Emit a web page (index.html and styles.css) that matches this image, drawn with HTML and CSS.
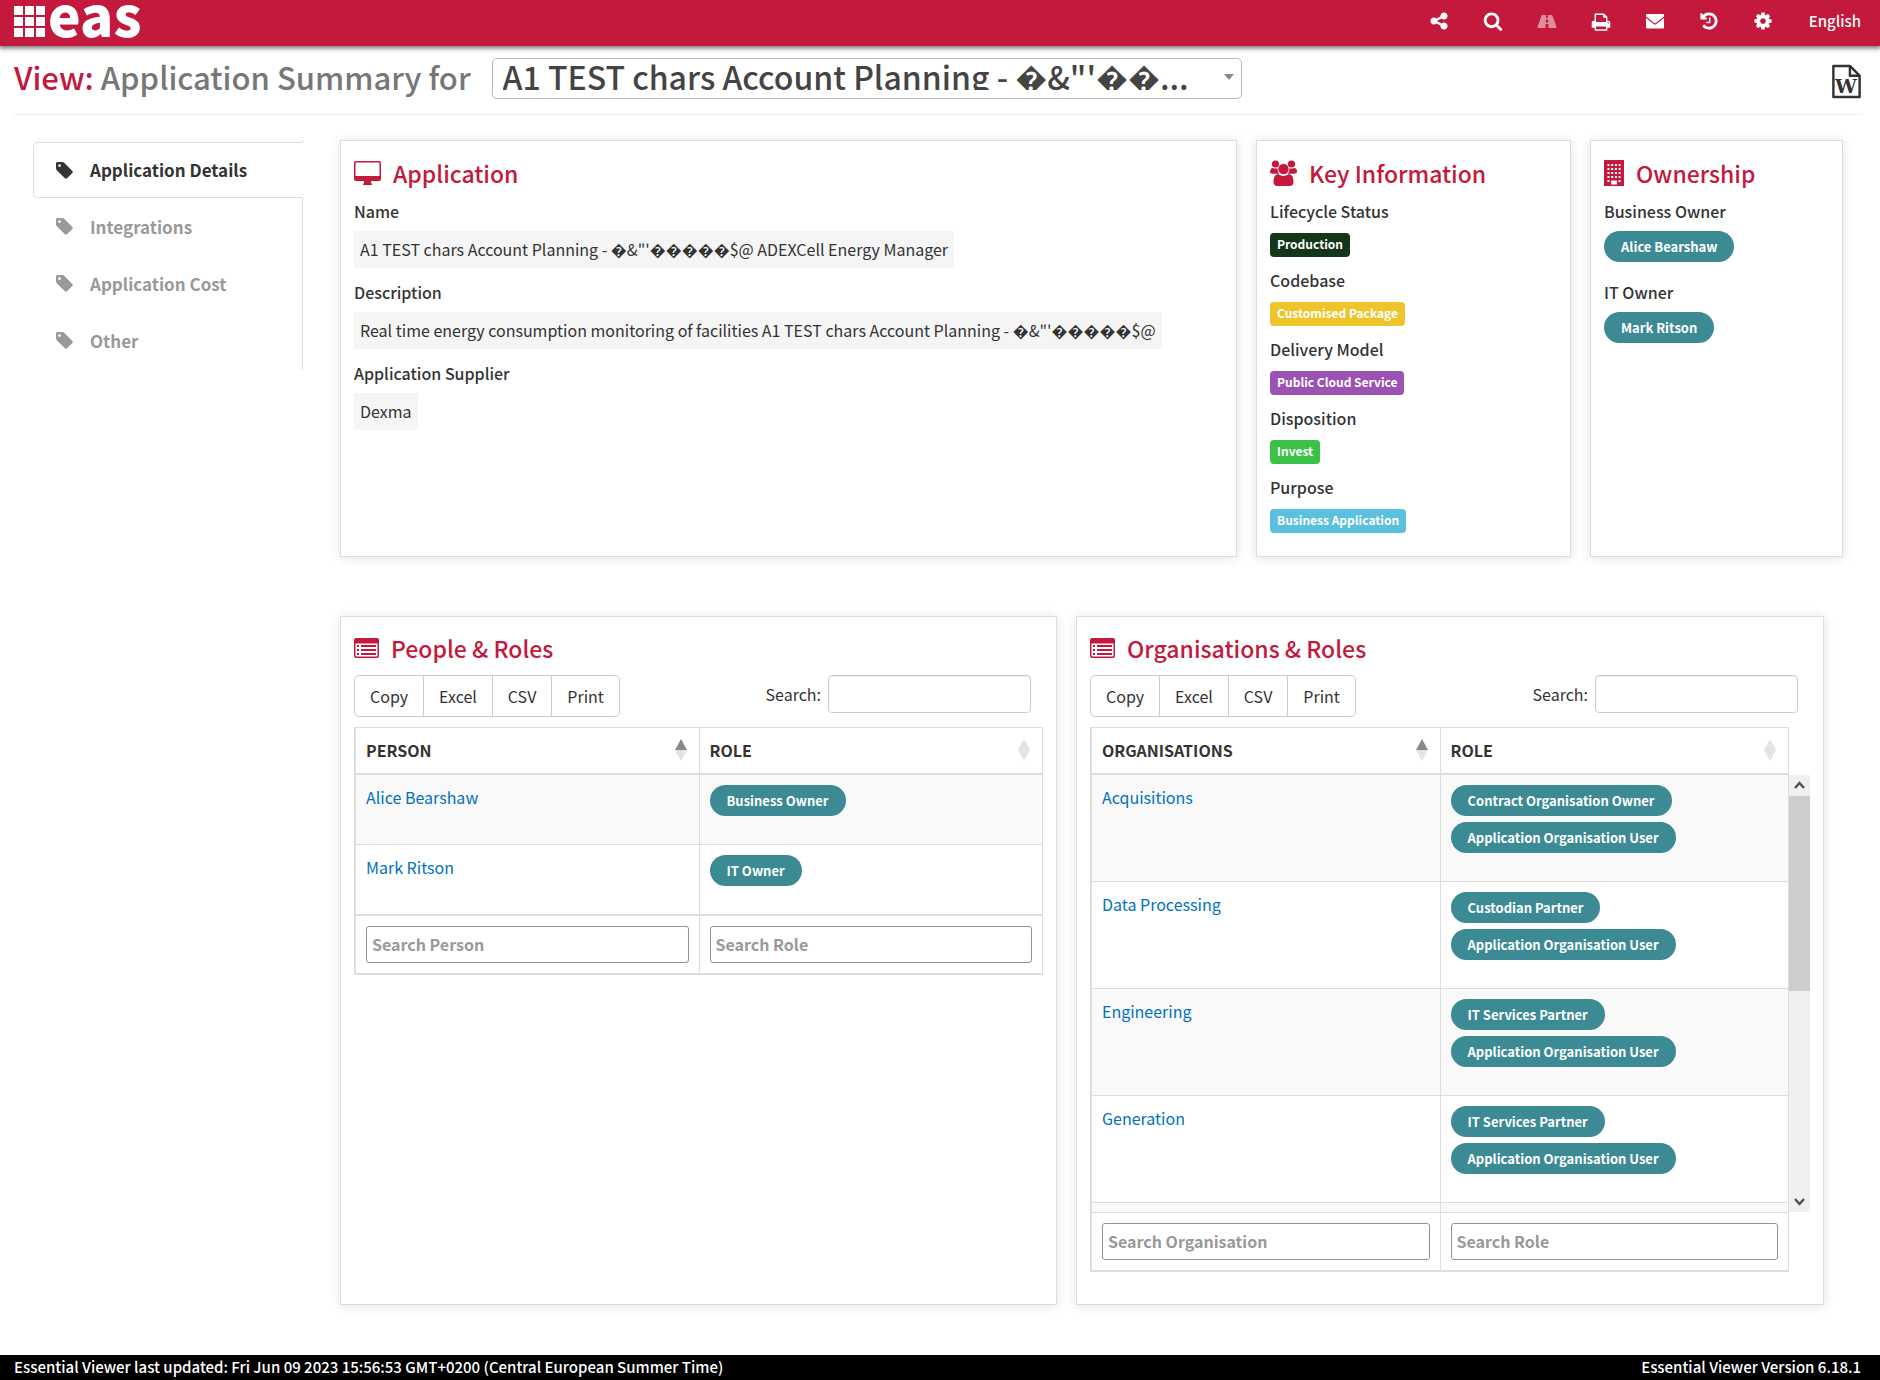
FILE: index.html
```html
<!DOCTYPE html>
<html lang="en">
<head>
<meta charset="utf-8">
<meta name="viewport" content="width=device-width, initial-scale=1">
<title>Application Summary</title>
<link rel="stylesheet" href="styles.css">
</head>
<body>
<svg class="sprite" aria-hidden="true">
  <symbol id="tag" viewBox="128 128 1536 1536"><path d="M576 448q0-53-37.500-90.500t-90.500-37.500-90.500 37.500-37.500 90.500 37.500 90.500 90.500 37.500 90.500-37.500 37.500-90.500zm1067 576q0 53-37 90l-491 492q-39 37-91 37-53 0-90-37l-715-716q-38-37-64.500-101t-26.500-117v-416q0-52 38-90t90-38h416q53 0 117 26.500t102 64.500l715 714q37 39 37 91z"/></symbol>
  <symbol id="list" viewBox="0 0 25 20"><path fill-rule="evenodd" d="M2 0H23a2 2 0 0 1 2 2V18a2 2 0 0 1-2 2H2a2 2 0 0 1-2-2V2A2 2 0 0 1 2 0ZM1.500 5.500V17.500a1 1 0 0 0 1 1H22.500a1 1 0 0 0 1-1V5.500ZM3 7H5V9H3ZM7 7H22V9H7ZM3 11H5V13H3ZM7 11H22V13H7ZM3 15H5V17H3ZM7 15H22V17H7Z"/></symbol>
</svg>

<header class="topbar">
  <a class="logo" href="#" aria-label="eas home">
    <svg width="31" height="32" viewBox="0 0 31 32" fill="#fff" aria-hidden="true"><path d="M0 0h9v9H0zM11 0h9v9h-9zM22 0h9v9h-9zM0 11h9v9H0zM11 11h9v9h-9zM22 11h9v9h-9zM0 22h9v9H0zM11 22h9v9h-9zM22 22h9v9h-9z"/></svg>
    <span class="logo-text">eas</span>
  </a>
  <nav class="tools" aria-label="Tools">
    <a href="#" aria-label="Share"><svg width="20" height="20" viewBox="0 0 1792 1792"><path d="M1344 1024q133 0 226.500 93.500t93.500 226.500-93.500 226.500-226.500 93.500-226.500-93.500-93.500-226.500q0-12 2-34l-360-180q-92 86-218 86-133 0-226.500-93.500t-93.500-226.500 93.500-226.500 226.500-93.500q126 0 218 86l360-180q-2-22-2-34 0-133 93.500-226.500t226.500-93.500 226.500 93.500 93.500 226.500-93.500 226.500-226.500 93.500q-126 0-218-86l-360 180q2 22 2 34t-2 34l360 180q92-86 218-86z"/></svg></a>
    <a href="#" aria-label="Search"><svg width="20" height="20" viewBox="0 0 1792 1792"><path d="M1216 832q0-185-131.500-316.500t-316.500-131.500-316.500 131.500-131.500 316.500 131.500 316.500 316.500 131.500 316.500-131.500 131.500-316.500zm512 832q0 52-38 90t-90 38q-54 0-90-38l-343-342q-179 124-399 124-143 0-273.500-55.500t-225-150-150-225-55.500-273.500 55.500-273.500 150-225 225-150 273.500-55.500 273.500 55.500 225 150 150 225 55.500 273.500q0 220-124 399l343 343q37 37 37 90z"/></svg></a>
    <a class="dim" href="#" aria-label="Roadmap"><svg width="20" height="20" viewBox="0 0 20 20"><path fill-rule="evenodd" d="M5.300 4H9.200L9 7H11L10.800 4H14.700Q15.200 4 15.400 4.500L19.400 15.500Q19.700 17 18.700 17H11.600L11.400 13H8.600L8.400 17H1.300Q.3 17 .6 15.500L4.600 4.500Q4.800 4 5.300 4ZM8.900 8.500L8.700 11.500H11.300L11.100 8.500Z"/></svg></a>
    <a href="#" aria-label="Print"><svg width="20" height="20" viewBox="0 -100 1792 1792"><path d="M448 1536h896v-256h-896v256zm0-640h896v-384h-160q-40 0-68-28t-28-68v-160h-640v640zm1152 64q0-26-19-45t-45-19-45 19-19 45 19 45 45 19 45-19 19-45zm128 0v416q0 13-9.500 22.500t-22.500 9.500h-224v160q0 40-28 68t-68 28h-960q-40 0-68-28t-28-68v-160h-224q-13 0-22.500-9.500t-9.500-22.500v-416q0-79 56.500-135.500t135.500-56.500h64v-544q0-40 28-68t68-28h672q40 0 88 20t76 48l152 152q28 28 48 76t20 88v256h64q79 0 135.500 56.500t56.500 135.500z"/></svg></a>
    <a href="#" aria-label="Mail"><svg width="20" height="20" viewBox="0 0 20 20"><path d="M2 3H18Q19 3 19 4V5.500L10.800 12Q10 12.600 9.200 12L1 5.500V4Q1 3 2 3ZM1 7L8.600 13Q10 14 11.400 13L19 7V16.500Q19 17.500 18 17.500H2Q1 17.500 1 16.500Z"/></svg></a>
    <a href="#" aria-label="History"><svg width="20" height="20" viewBox="0 0 1792 1792"><path d="M1664 896q0 156-61 298t-164 245-245 164-298 61q-172 0-327-72.500t-264-204.500q-7-10-6.500-22.500t8.500-20.500l137-138q10-9 25-9 16 2 23 12 73 95 179 147t225 52q104 0 198.500-40.500t163.500-109.500 109.500-163.500 40.500-198.500-40.500-198.500-109.500-163.500-163.500-109.500-198.500-40.500q-98 0-188 35.500t-160 101.500l137 138q31 30 14 69-17 40-59 40h-448q-26 0-45-19t-19-45v-448q0-42 40-59 39-17 69 14l130 129q107-101 244.500-156.500t284.500-55.500q156 0 298 61t245 164 164 245 61 298zm-640-288v448q0 14-9 23t-23 9h-320q-14 0-23-9t-9-23v-64q0-14 9-23t23-9h224v-352q0-14 9-23t23-9h64q14 0 23 9t9 23z"/></svg></a>
    <a href="#" aria-label="Settings"><svg width="20" height="20" viewBox="0 0 1792 1792"><path d="M1152 896q0-106-75-181t-181-75-181 75-75 181 75 181 181 75 181-75 75-181zm512-109v222q0 12-8 23t-20 13l-185 28q-19 54-39 91 35 50 107 138 10 12 10 25t-9 23q-27 37-99 108t-94 71q-12 0-26-9l-138-108q-44 23-91 38-16 136-29 186-7 28-36 28h-222q-14 0-24.500-8.500t-11.500-21.500l-28-184q-49-16-90-37l-141 107q-10 9-25 9-14 0-25-11-126-114-165-168-7-10-7-23 0-12 8-23 15-21 51-66.500t54-70.500q-27-50-41-99l-183-27q-13-2-21-12.500t-8-23.500v-222q0-12 8-23t19-13l186-28q14-46 39-92-40-57-107-138-10-12-10-24 0-10 9-23 26-36 98.500-107.500t94.500-71.500q13 0 26 10l138 107q44-23 91-38 16-136 29-186 7-28 36-28h222q14 0 24.500 8.500t11.500 21.500l28 184q49 16 90 37l142-107q9-9 24-9 13 0 25 10 129 119 165 170 7 8 7 22 0 12-8 23-15 21-51 66.500t-54 70.500q26 50 41 98l183 28q13 2 21 12.500t8 23.500z"/></svg></a>
    <a class="language" href="#">English</a>
  </nav>
</header>

<div class="page">
  <div class="title-row">
    <h1><label for="app"><span class="accent">View:</span> Application Summary for</label></h1>
    <span class="picker">
      <select id="app"><option>A1 TEST chars Account Planning - &#xFFFD;&amp;"'&#xFFFD;&#xFFFD;...</option></select>
    </span>
    <a class="word" href="#" aria-label="Export to Word"><svg width="31" height="36" viewBox="0 0 31 36"><path d="M2 2H19L29 12V34H2ZM19 2V12H29" fill="none" stroke="#333" stroke-width="2.500" stroke-linejoin="round"/><text x="15" y="30" text-anchor="middle" class="word-letter">W</text></svg></a>
  </div>

  <div class="content">
    <nav class="tabs" aria-label="Sections">
      <a class="tab active" href="#"><svg width="17" height="17"><use href="#tag"/></svg>Application Details</a>
      <a class="tab" href="#"><svg width="17" height="17"><use href="#tag"/></svg>Integrations</a>
      <a class="tab" href="#"><svg width="17" height="17"><use href="#tag"/></svg>Application Cost</a>
      <a class="tab" href="#"><svg width="17" height="17"><use href="#tag"/></svg>Other</a>
    </nav>

    <main class="panels">
      <div class="row summary">
        <section class="card">
          <h2><svg width="27" height="24" viewBox="0 0 27 24"><path fill-rule="evenodd" d="M2 0H25Q27 0 27 2V18Q27 20 25 20H17V22Q18 22 18 24H9Q9 22 10 22V20H2Q0 20 0 18V2Q0 0 2 0ZM2.500 1.500Q1.500 1.500 1.500 2.500V15H25.500V2.500Q25.500 1.500 24.500 1.500Z"/></svg>Application</h2>
          <h3>Name</h3>
          <p class="value">A1 TEST chars Account Planning - &#xFFFD;&amp;"'&#xFFFD;&#xFFFD;&#xFFFD;&#xFFFD;&#xFFFD;$@ ADEXCell Energy Manager</p>
          <h3>Description</h3>
          <p class="value">Real time energy consumption monitoring of facilities A1 TEST chars Account Planning - &#xFFFD;&amp;"'&#xFFFD;&#xFFFD;&#xFFFD;&#xFFFD;&#xFFFD;$@</p>
          <h3>Application Supplier</h3>
          <p class="value">Dexma</p>
        </section>
        <section class="card">
          <h2><svg width="27" height="26" viewBox="0 0 27 26"><circle cx="5.500" cy="4" r="3.600"/><circle cx="21.500" cy="4" r="3.600"/><path d="M0 12Q0 8 3 8Q5 9 7.500 8.300Q7.500 12 9 13.800H2.500Q0 13.800 0 12ZM27 12Q27 8 24 8Q22 9 19.500 8.300Q19.500 12 18 13.800H24.500Q27 13.800 27 12Z"/><circle cx="13.500" cy="9" r="5.200"/><path d="M3.500 22Q3.500 14.500 8 14Q11 16 13.500 16T19 14Q23.500 14.500 23.500 22Q23.500 26 19.500 26H7.500Q3.500 26 3.500 22Z"/></svg>Key Information</h2>
          <h3>Lifecycle Status</h3>
          <span class="badge production">Production</span>
          <h3>Codebase</h3>
          <span class="badge package">Customised Package</span>
          <h3>Delivery Model</h3>
          <span class="badge cloud">Public Cloud Service</span>
          <h3>Disposition</h3>
          <span class="badge invest">Invest</span>
          <h3>Purpose</h3>
          <span class="badge business">Business Application</span>
        </section>
        <section class="card owners">
          <h2><svg width="20" height="26" viewBox="0 0 20 26"><path fill-rule="evenodd" d="M0 0H20V26H0ZM3.500 4V6H5.500V4ZM7.200 4V6H9.200V4ZM10.900 4V6H12.900V4ZM14.600 4V6H16.600V4ZM3.500 8V10H5.500V8ZM7.200 8V10H9.200V8ZM10.900 8V10H12.900V8ZM14.600 8V10H16.600V8ZM3.500 12V14H5.500V12ZM7.200 12V14H9.200V12ZM10.900 12V14H12.900V12ZM14.600 12V14H16.600V12ZM3.500 16V18H5.500V16ZM7.200 16V18H9.200V16ZM10.900 16V18H12.900V16ZM14.600 16V18H16.600V16ZM3.500 20V22H5.500V20ZM14.600 20V22H16.600V20ZM7.200 20.500V24.500H12.900V20.500Z"/></svg>Ownership</h2>
          <h3>Business Owner</h3>
          <span class="pill">Alice Bearshaw</span>
          <h3>IT Owner</h3>
          <span class="pill">Mark Ritson</span>
        </section>
      </div>

      <div class="row roles">
        <section class="card">
          <h2><svg width="25" height="20"><use href="#list"/></svg>People &amp; Roles</h2>
          <div class="controls">
            <div class="buttons"><button type="button">Copy</button><button type="button">Excel</button><button type="button">CSV</button><button type="button">Print</button></div>
            <label class="search">Search: <input type="search"></label>
          </div>
          <table class="grid">
            <thead><tr>
              <th scope="col"><span class="sort">Person<svg width="12" height="22" viewBox="0 0 12 22"><path class="on" d="M6 0L12 11H0Z"/><path d="M0 11H12L6 22Z"/></svg></span></th>
              <th scope="col"><span class="sort">Role<svg width="12" height="22" viewBox="0 0 12 22"><path d="M6 0L12 11H0ZM0 11H12L6 22Z"/></svg></span></th>
            </tr></thead>
            <tbody>
              <tr><td><a href="#">Alice Bearshaw</a></td><td><div class="pills"><span class="pill">Business Owner</span></div></td></tr>
              <tr><td><a href="#">Mark Ritson</a></td><td><div class="pills"><span class="pill">IT Owner</span></div></td></tr>
            </tbody>
            <tfoot><tr>
              <td><input type="text" placeholder="Search Person" aria-label="Search Person"></td>
              <td><input type="text" placeholder="Search Role" aria-label="Search Role"></td>
            </tr></tfoot>
          </table>
        </section>

        <section class="card">
          <h2><svg width="25" height="20"><use href="#list"/></svg>Organisations &amp; Roles</h2>
          <div class="controls">
            <div class="buttons"><button type="button">Copy</button><button type="button">Excel</button><button type="button">CSV</button><button type="button">Print</button></div>
            <label class="search">Search: <input type="search"></label>
          </div>
          <div class="scroll-grid">
            <table class="grid">
              <thead><tr>
                <th scope="col"><span class="sort">Organisations<svg width="12" height="22" viewBox="0 0 12 22"><path class="on" d="M6 0L12 11H0Z"/><path d="M0 11H12L6 22Z"/></svg></span></th>
                <th scope="col"><span class="sort">Role<svg width="12" height="22" viewBox="0 0 12 22"><path d="M6 0L12 11H0ZM0 11H12L6 22Z"/></svg></span></th>
              </tr></thead>
            </table>
            <div class="viewport">
              <table class="grid">
                <tbody>
                  <tr><td><a href="#">Acquisitions</a></td><td><div class="pills"><span class="pill">Contract Organisation Owner</span><span class="pill">Application Organisation User</span></div></td></tr>
                  <tr><td><a href="#">Data Processing</a></td><td><div class="pills"><span class="pill">Custodian Partner</span><span class="pill">Application Organisation User</span></div></td></tr>
                  <tr><td><a href="#">Engineering</a></td><td><div class="pills"><span class="pill">IT Services Partner</span><span class="pill">Application Organisation User</span></div></td></tr>
                  <tr><td><a href="#">Generation</a></td><td><div class="pills"><span class="pill">IT Services Partner</span><span class="pill">Application Organisation User</span></div></td></tr>
                  <tr><td></td><td></td></tr>
                </tbody>
              </table>
            </div>
            <div class="scrollbar" aria-hidden="true">
              <svg width="21" height="21" viewBox="0 0 21 21"><path d="M6 13L10.500 8L15 13"/></svg>
              <span class="thumb"></span>
              <svg width="21" height="21" viewBox="0 0 21 21"><path d="M6 8L10.500 13L15 8"/></svg>
            </div>
            <table class="grid">
              <tfoot><tr>
                <td><input type="text" placeholder="Search Organisation" aria-label="Search Organisation"></td>
                <td><input type="text" placeholder="Search Role" aria-label="Search Organisation Role"></td>
              </tr></tfoot>
            </table>
          </div>
        </section>
      </div>
    </main>
  </div>
</div>

<footer class="footer"><span>Essential Viewer last updated: Fri Jun 09 2023 15:56:53 GMT+0200 (Central European Summer Time)</span><span>Essential Viewer Version 6.18.1</span></footer>
</body>
</html>
```
FILE: styles.css
```css
* { box-sizing: border-box; }

body {
  margin: 0;
  min-height: 100vh;
  display: flex;
  flex-direction: column;
  background: #fff;
  color: #333;
  font: 400 16px/24px "Noto Sans CJK SC", "Noto Sans", sans-serif;
}

h1, h2, h3, p { margin: 0; }
a { color: #0071c1; text-decoration: none; }
svg { display: block; flex: none; }
.sprite { position: absolute; width: 0; height: 0; }

/* Top bar */
.topbar {
  height: 46px;
  padding: 0 19px 0 14px;
  display: flex;
  justify-content: space-between;
  background: #c3193c;
  box-shadow: 0 1px 5px 1px rgba(0, 0, 0, .6);
}
.logo { display: flex; align-items: flex-start; gap: 3px; padding-top: 6px; color: #fff; }
.logo-text { font-size: 55px; line-height: 14px; font-weight: 900; }
.tools { display: flex; align-items: center; gap: 34px; height: 42px; }
.tools a { color: #fff; }
.tools svg { fill: #fff; }
.tools .dim { opacity: .5; }
.language { padding-left: 2px; font-size: 15px; font-weight: 500; }

/* Title */
.page { padding: 0 18px 0 14px; }
.title-row {
  display: flex;
  align-items: flex-start;
  padding: 12px 0 15px;
  border-bottom: 1px solid #eee;
}
h1 { flex: none; font-size: 31px; line-height: 38px; font-weight: 500; color: #777; }
.accent { color: #c3193c; }
.picker { position: relative; flex: 0 1 750px; min-width: 0; margin-left: 21px; }
.picker::after {
  content: "";
  position: absolute;
  right: 8px;
  top: 16px;
  border: 5px solid transparent;
  border-top: 6px solid #888;
  border-bottom: 0;
}
.picker select {
  display: block;
  width: 100%;
  height: 41px;
  padding: 0 24px 8px 10px;
  appearance: none;
  border: 1px solid #bbb;
  border-radius: 5px;
  background: #fff;
  color: #444;
  font: 500 32px/34px "Noto Sans CJK SC", "Noto Sans", sans-serif;
}
.word { margin: 6px 0 0 auto; }
.word svg { height: 35px; }
.word-letter { font: bold 20px "DejaVu Serif", serif; fill: #333; }

/* Section tabs */
.content { display: flex; align-items: flex-start; gap: 37px; padding: 25px 19px 0; }
.tabs { flex: 0 0 270px; padding-top: 2px; border-right: 1px solid #ddd; }
.tab {
  display: flex;
  align-items: center;
  gap: 17px;
  height: 57px;
  padding: 0 0 2px 23px;
  color: #999;
  font-size: 17px;
  font-weight: 700;
}
.tab svg { fill: currentColor; }
.tab.active {
  height: 56px;
  margin: 0 -1px 1px 0;
  padding: 0 0 0 22px;
  border: 1px solid #ddd;
  border-right-color: #fff;
  border-radius: 5px 0 0 5px;
  background: #fff;
  color: #333;
}

/* Cards */
.panels { flex: 1; min-width: 0; }
.row { display: grid; gap: 19px; }
.summary { grid-template-columns: 897fr 315fr 253fr; margin-bottom: 59px; }
.roles { grid-template-columns: 717fr 748fr; padding-right: 19px; }
.card {
  min-width: 0;
  padding: 16px 13px 12px;
  border: 1px solid #ddd;
  box-shadow: 0 1px 10px rgba(0, 0, 0, .12);
}
.roles .card { padding: 15px 13px 32px; }
h2 {
  display: flex;
  align-items: center;
  gap: 12px;
  height: 32px;
  margin-bottom: 10px;
  color: #c3193c;
  font-size: 23px;
  line-height: 32px;
  font-weight: 500;
}
h2 svg { fill: currentColor; }
.roles h2 { margin-bottom: 11px; }
h3 { font-size: 16px; line-height: 24px; font-weight: 500; }
.value {
  width: fit-content;
  margin: 8px 0 12px;
  padding: 6px 6px 7px;
  background: #f5f5f5;
}
.badge {
  display: block;
  width: fit-content;
  margin: 10px 0 11px;
  padding: 3px 7px 5px;
  border-radius: 4px;
  color: #fff;
  font-size: 12px;
  line-height: 16px;
  font-weight: 700;
}
.production { background: #14361a; }
.package { background: #eec42a; }
.cloud { background: #9b53b3; }
.invest { background: #3bc147; }
.business { background: #5bc0de; }
.pill {
  display: block;
  width: fit-content;
  padding: 5px 17px;
  border-radius: 16px;
  background: #3c8a94;
  color: #fff;
  font-size: 13px;
  line-height: 21px;
  font-weight: 700;
}
.owners .pill { margin: 8px 0 18px; }
.pills { display: grid; gap: 6px; }

/* Table controls */
.controls { display: flex; justify-content: space-between; align-items: flex-start; margin-bottom: 10px; padding-right: 12px; }
.buttons { display: flex; }
button {
  height: 42px;
  margin: 0 0 0 -1px;
  padding: 0 15px;
  border: 1px solid #ccc;
  background: #fff;
  color: #333;
  font: inherit;
}
button:first-child { margin: 0; border-radius: 5px 0 0 5px; }
button:last-child { border-radius: 0 5px 5px 0; }
.search { display: flex; align-items: center; gap: 7px; line-height: 22px; }
.search input {
  width: 203px;
  height: 38px;
  border: 1px solid #ccc;
  border-radius: 4px;
  background: #fff;
  box-shadow: inset 0 1px 1px rgba(0, 0, 0, .08);
  appearance: none;
  font: inherit;
}

/* Tables */
.grid {
  width: 100%;
  table-layout: fixed;
  border-collapse: separate;
  border-spacing: 0;
  border-left: 2px solid #ddd;
}
.grid th, .grid td { border-right: 1px solid #ddd; text-align: left; vertical-align: top; }
.grid th {
  height: 48px;
  padding: 0 10px 2px;
  border-top: 1px solid #ddd;
  border-bottom: 2px solid #ddd;
  vertical-align: middle;
  font-weight: 700;
  text-transform: uppercase;
}
.sort { display: flex; justify-content: space-between; align-items: center; }
.sort svg { margin-right: 2px; fill: #e3e3e3; }
.sort .on { fill: #888; }
.grid tbody td { height: 70px; padding: 10px 10px 28px; border-bottom: 1px solid #ddd; }
.grid tbody tr:nth-child(odd) { background: #f9f9f9; }
.grid tfoot td { padding: 10px; border-top: 1px solid #ddd; border-bottom: 2px solid #ddd; }
.grid tfoot input {
  display: block;
  width: 100%;
  height: 37px;
  padding: 0 5px 1px;
  border: 1px solid #8f8f9d;
  border-radius: 3px;
  font: inherit;
  font-weight: 700;
}
.grid tfoot input::placeholder { color: #999; opacity: 1; }

.scroll-grid { display: grid; grid-template-columns: minmax(0, 1fr) 21px; }
.scroll-grid > .grid, .viewport { grid-column: 1; }
.viewport { height: 437px; overflow: hidden; }
.scrollbar { grid-column: 2; display: flex; flex-direction: column; background: #f0f0f0; }
.scrollbar svg { fill: none; stroke: #505050; stroke-width: 2.500; }
.thumb { height: 195px; margin-bottom: auto; background: #cdcdcd; }

/* Footer */
.footer {
  display: flex;
  justify-content: space-between;
  margin-top: auto;
  padding: 0 19px 1px 14px;
  background: #000;
  color: #fff;
  font-size: 15px;
  font-weight: 500;
}
```
